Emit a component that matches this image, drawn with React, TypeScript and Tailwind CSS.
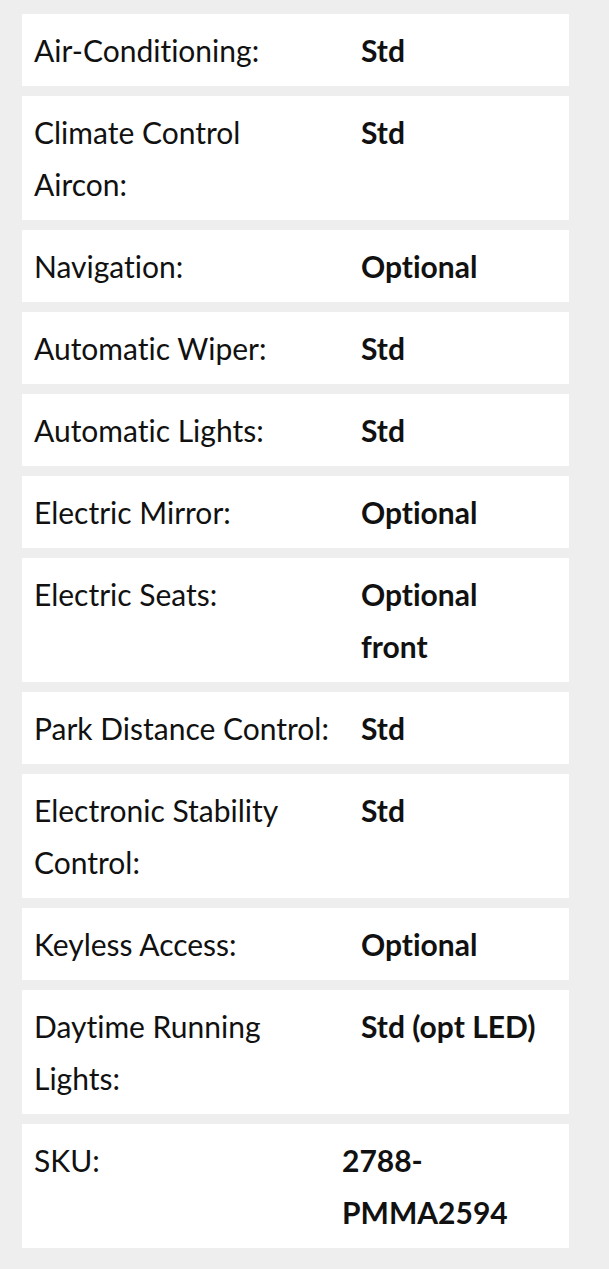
import React from 'react';

// Строки спецификации
const specs: { label: string; value: string }[] = [
  { label: 'Air-Conditioning:', value: 'Std' },
  { label: 'Climate Control Aircon:', value: 'Std' },
  { label: 'Navigation:', value: 'Optional' },
  { label: 'Automatic Wiper:', value: 'Std' },
  { label: 'Automatic Lights:', value: 'Std' },
  { label: 'Electric Mirror:', value: 'Optional' },
  { label: 'Electric Seats:', value: 'Optional front' },
  { label: 'Park Distance Control:', value: 'Std' },
  { label: 'Electronic Stability Control:', value: 'Std' },
  { label: 'Keyless Access:', value: 'Optional' },
  { label: 'Daytime Running Lights:', value: 'Std (opt LED)' },
];

function SpecRow({ label, value, labelWidth = 'w-[327px] pr-[27px]', valueWidth = 'w-[182px]' }: {
  label: string;
  value: string;
  labelWidth?: string;
  valueWidth?: string;
}) {
  return (
    <div className="flex bg-white pl-3 py-[10px] text-[30px] leading-[52px] text-[#111]">
      <div className={`${labelWidth} shrink-0`}>{label}</div>
      <div className={`${valueWidth} font-bold`}>{value}</div>
    </div>
  );
}

export default function App() {
  return (
    <div
      className="min-h-screen bg-[#eeeeee] pl-[22px] pr-[40px] pt-[14px] pb-[21px] [font-variant-ligatures:none]"
      style={{ fontFamily: '"Lato", "Noto Sans", sans-serif' }}
    >
      <div className="flex flex-col gap-[10px]">
        {specs.map((s) => (
          <SpecRow key={s.label} label={s.label} value={s.value} />
        ))}
        <SpecRow label="SKU:" value="2788-PMMA2594" labelWidth="w-[308px] pr-4" valueWidth="w-[150px]" />
      </div>
    </div>
  );
}
